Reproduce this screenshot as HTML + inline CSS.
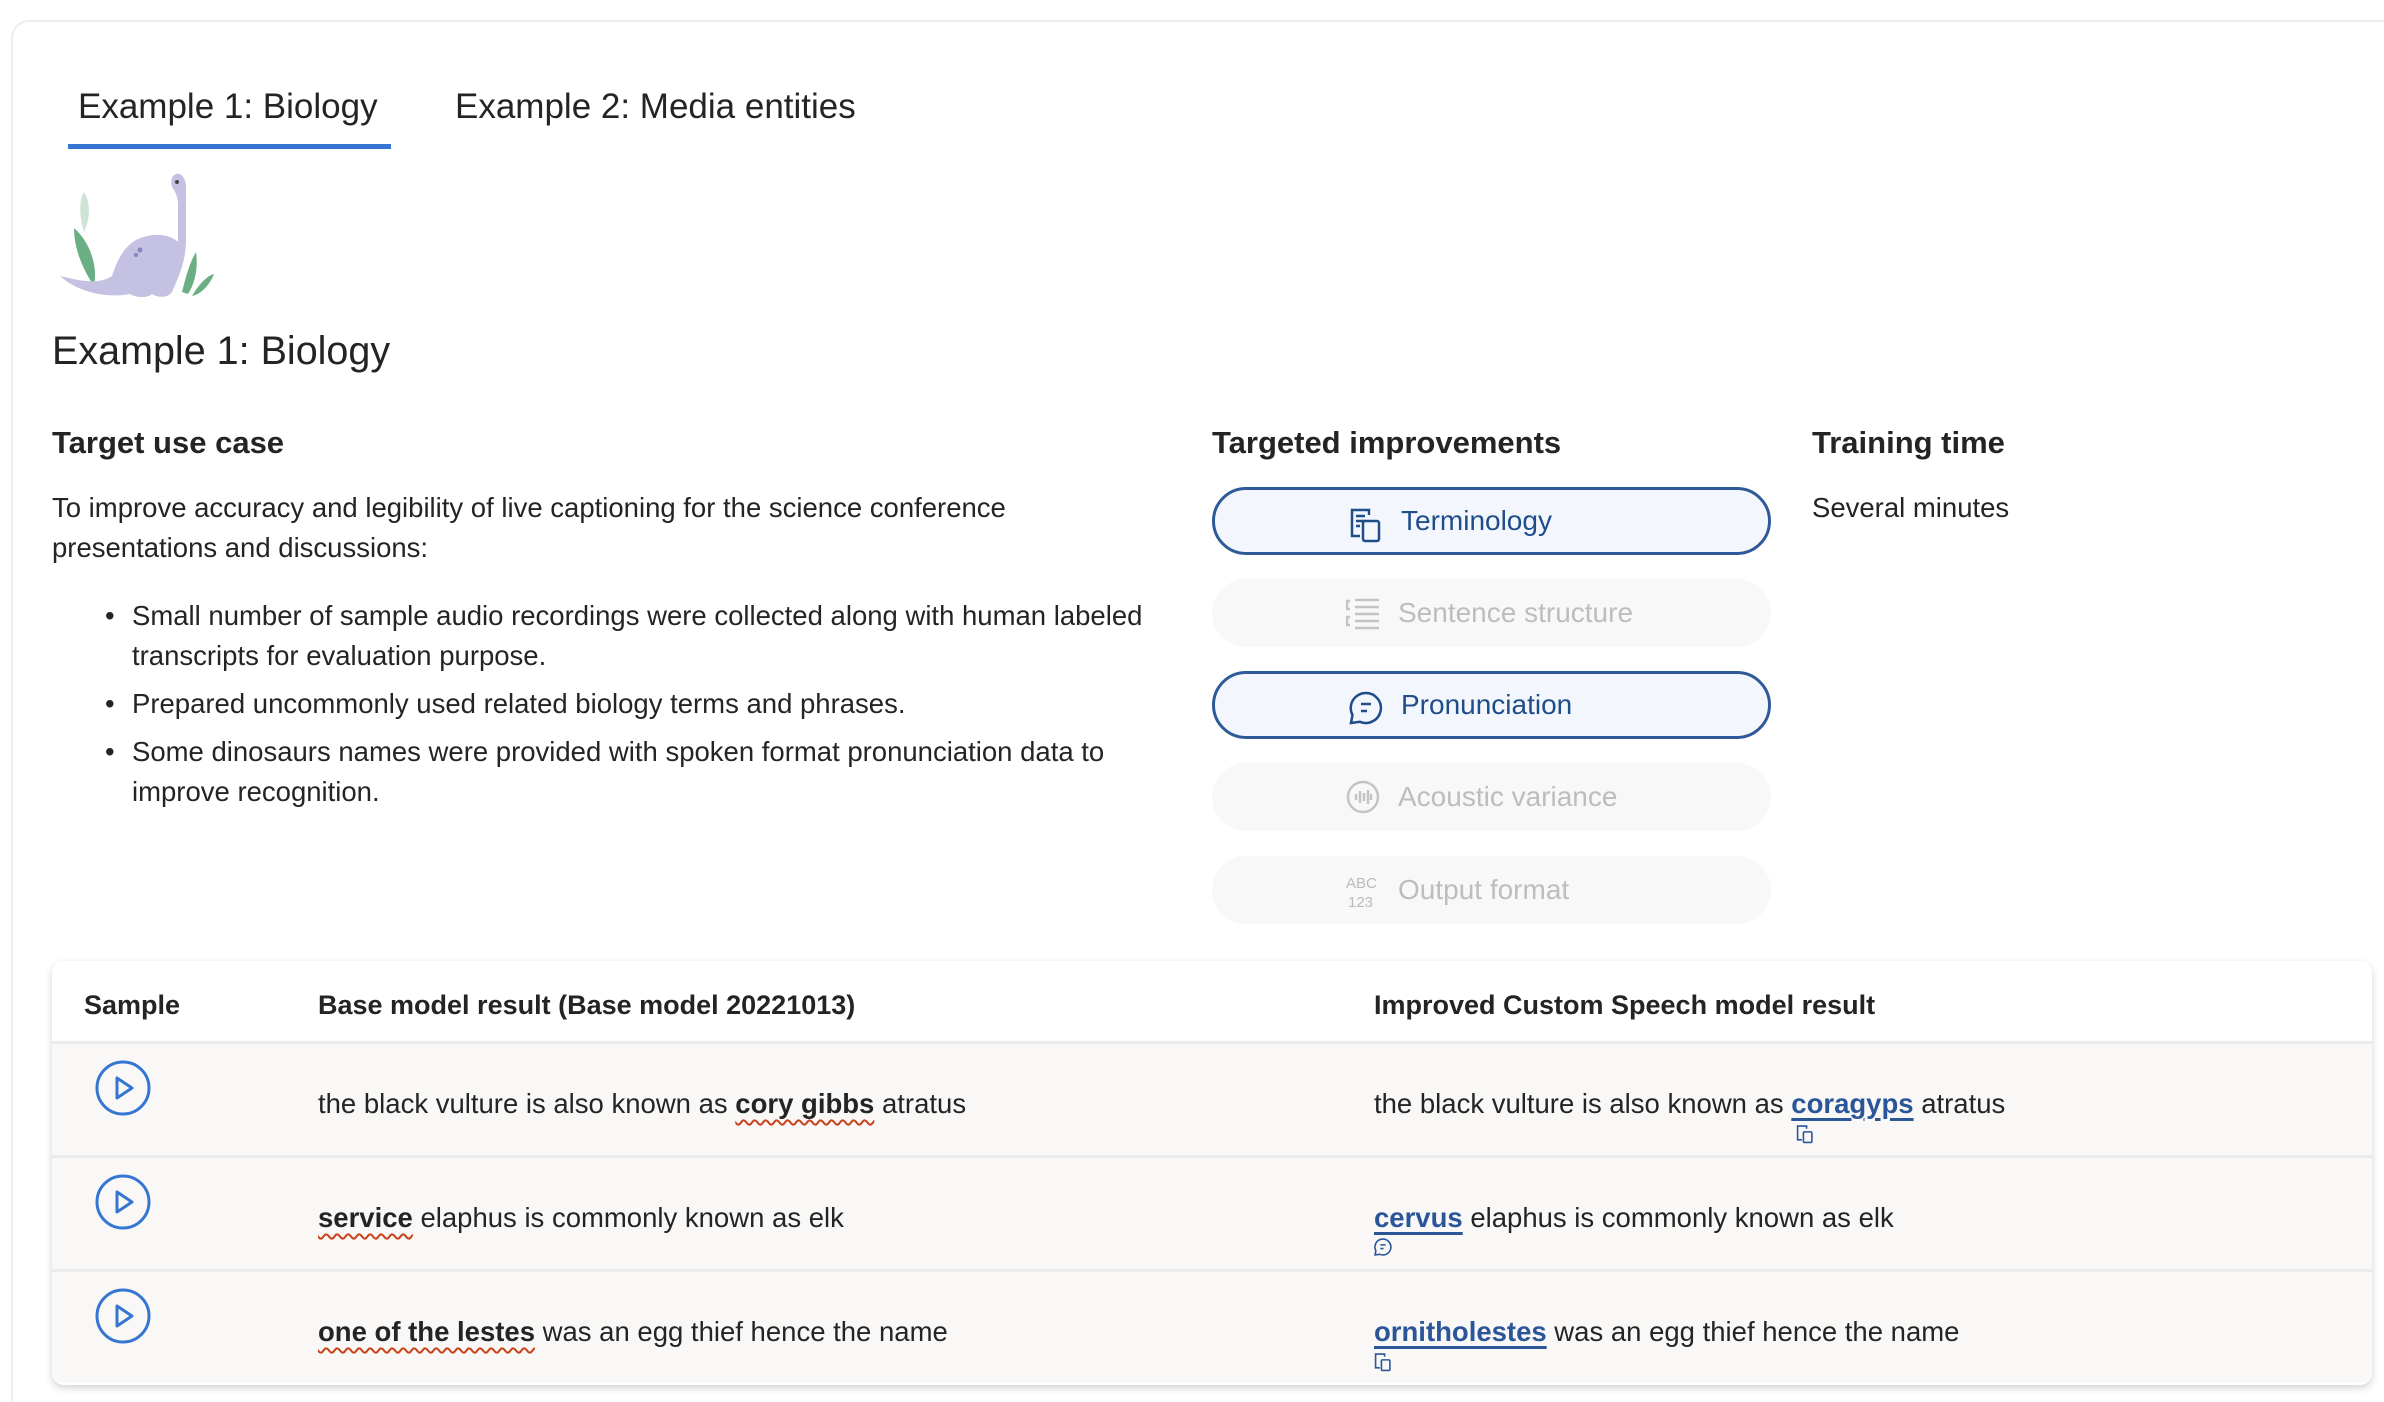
<!DOCTYPE html>
<html><head><meta charset="utf-8"><style>
*{box-sizing:border-box;margin:0;padding:0}
html,body{overflow:hidden}
body{width:2384px;height:1402px;background:#fff;font-family:"Liberation Sans",sans-serif;color:#242424;position:relative}
.card{position:absolute;left:11px;top:20px;width:2390px;height:1382px;border:2px solid #eeeeee;border-bottom:none;border-radius:18px 18px 0 0;background:#fff}
.abs{position:absolute;white-space:nowrap}
.tab{font-size:35px;top:87px}
.ul{position:absolute;left:68px;top:144px;width:323px;height:5px;background:#3476d2}
h2{position:absolute;left:52px;top:329px;font-size:39.5px;font-weight:normal;color:#242424}
h3{position:absolute;font-size:31px;font-weight:bold;top:425px;color:#242424}
.p{font-size:27.5px;line-height:40px;position:absolute}
.pill{position:absolute;left:1212px;width:559px;height:68px;border-radius:34px;background:#f8f8f8;color:#bdbdbd;font-size:28px}
.pill.on{border:3px solid #2e5a99;background:#f3f7fd;color:#1f4d8a}
.pill svg{position:absolute;left:134px;top:17px}
.pill span{position:absolute;left:186px;top:18px;white-space:nowrap}
.pill.on span{top:15px}
.tbl{position:absolute;left:52px;top:961px;width:2320px;height:424px;border-radius:12px;background:#fff;box-shadow:0 3px 8px rgba(0,0,0,.18);overflow:hidden}
.row{position:absolute;left:0;width:100%;height:114px;background:#f9f8f7;border-top:3px solid #ebebeb}
.t{position:absolute;font-size:27.5px;white-space:nowrap}
.th{font-size:27px;font-weight:bold;top:29px}
b.sq{text-decoration:underline wavy #c8421b;text-underline-offset:6px;text-decoration-thickness:2px}
a.l{color:#2a5699;font-weight:bold;text-decoration:underline;text-decoration-thickness:3px;text-underline-offset:5px}
.play{position:absolute;left:43px;top:16px}
.mi{position:absolute}
</style></head><body>
<div class="card"></div>
<div class="abs tab" style="left:78px">Example 1: Biology</div>
<div class="abs tab" style="left:455px">Example 2: Media entities</div>
<div class="ul"></div>
<svg class="abs" style="left:52px;top:172px" width="165" height="128" viewBox="0 0 165 128">
<path d="M32 20c-6 10-4 28 0 40 5-10 8-28 0-40z" fill="#cfe3d6"/>
<path d="M22 56c0 20 8 40 20 58 4-20-4-44-20-58z" fill="#6aae84"/>
<path d="M8 104c20 18 50 22 70 18 6 4 18 4 22 0 6 4 16 4 20-2 6-14 14-30 14-52V14c0-8-6-14-10-12-6 2-6 12-2 16 2 4 4 8 4 14v38c-8-8-26-10-42-2-14 8-20 24-24 36-12 8-28 6-52 0z" fill="#c4c1e2"/>
<circle cx="125" cy="10" r="2" fill="#444"/>
<circle cx="88" cy="78" r="2.5" fill="#8883bb"/><circle cx="84" cy="83" r="2" fill="#8883bb"/>
<path d="M130 120c4-16 8-30 14-40 2 14 0 30-8 42zM140 124c6-10 14-20 22-22-4 10-12 20-22 22z" fill="#6aae84"/>
</svg>
<h2>Example 1: Biology</h2>
<h3 style="left:52px">Target use case</h3>
<div class="p" style="left:52px;top:488px;width:1100px">To improve accuracy and legibility of live captioning for the science conference<br>presentations and discussions:</div>
<div class="p" style="left:105px;top:596px">•</div><div class="p" style="left:132px;top:596px">Small number of sample audio recordings were collected along with human labeled<br>transcripts for evaluation purpose.</div>
<div class="p" style="left:105px;top:684px">•</div><div class="p" style="left:132px;top:684px">Prepared uncommonly used related biology terms and phrases.</div>
<div class="p" style="left:105px;top:732px">•</div><div class="p" style="left:132px;top:732px">Some dinosaurs names were provided with spoken format pronunciation data to<br>improve recognition.</div>
<h3 style="left:1212px">Targeted improvements</h3>
<h3 style="left:1812px">Training time</h3>
<div class="p" style="left:1812px;top:488px">Several minutes</div>

<div class="pill on" style="top:487px"><svg width="34" height="36" viewBox="0 0 34 36" fill="none" stroke="#1f4d8a" stroke-width="2.5"><path d="M20 8V3H3v26h8"/><path d="M7 9h9M7 14h9M7 19h4"/><rect x="14" y="14" width="16" height="20" rx="2"/></svg><span>Terminology</span></div>
<div class="pill" style="top:579px"><svg width="34" height="34" viewBox="0 0 34 34" fill="none" stroke="#c4c4c4" stroke-width="2.5"><path d="M4 5H1v8h3M4 21H1v8h3M9 4h24M9 11h24M9 18h24M9 25h24M9 32h24"/></svg><span>Sentence structure</span></div>
<div class="pill on" style="top:671px"><svg width="34" height="34" viewBox="0 0 34 34" fill="none" stroke="#1f4d8a" stroke-width="2.5"><path d="M17 2a15 15 0 1 1-6 28.8L2 32l1.5-8A15 15 0 0 1 17 2z"/><path d="M12 13h10M12 20h6"/></svg><span>Pronunciation</span></div>
<div class="pill" style="top:763px"><svg width="34" height="34" viewBox="0 0 34 34" fill="none" stroke="#c4c4c4" stroke-width="2.5"><circle cx="17" cy="17" r="15"/><path d="M10 14v6M14 11v12M18 13v8M22 10v14M25 14v6"/></svg><span>Acoustic variance</span></div>
<div class="pill" style="top:856px"><svg width="36" height="38" viewBox="0 0 36 38"><text x="0" y="15" font-size="15" fill="#bbb" font-family="Liberation Sans">ABC</text><text x="2" y="34" font-size="15" fill="#bbb" font-family="Liberation Sans">123</text></svg><span>Output format</span></div>

<div class="tbl">
<div class="t th" style="left:32px">Sample</div>
<div class="t th" style="left:266px">Base model result (Base model 20221013)</div>
<div class="t th" style="left:1322px">Improved Custom Speech model result</div>
<div class="row" style="top:80px">
<svg class="play" width="56" height="56" viewBox="0 0 56 56" fill="none" stroke="#3476d2" stroke-width="3"><circle cx="28" cy="28" r="26"/><path d="M22 18v20l15-10z" stroke-linejoin="round"/></svg>
<div class="t" style="left:266px;top:44px">the black vulture is also known as <b class="sq">cory gibbs</b> atratus</div>
<div class="t" style="left:1322px;top:44px">the black vulture is also known as <a class="l">coragyps</a> atratus</div>
<svg class="mi" style="left:1744px;top:80px" width="18" height="20" viewBox="0 0 34 36" fill="none" stroke="#2a5699" stroke-width="3"><path d="M20 8V3H3v26h8"/><rect x="14" y="14" width="16" height="20" rx="2"/></svg>
</div>
<div class="row" style="top:194px">
<svg class="play" width="56" height="56" viewBox="0 0 56 56" fill="none" stroke="#3476d2" stroke-width="3"><circle cx="28" cy="28" r="26"/><path d="M22 18v20l15-10z" stroke-linejoin="round"/></svg>
<div class="t" style="left:266px;top:44px"><b class="sq">service</b> elaphus is commonly known as elk</div>
<div class="t" style="left:1322px;top:44px"><a class="l">cervus</a> elaphus is commonly known as elk</div>
<svg class="mi" style="left:1322px;top:80px" width="18" height="18" viewBox="0 0 34 34" fill="none" stroke="#2a5699" stroke-width="3"><path d="M17 2a15 15 0 1 1-6 28.8L2 32l1.5-8A15 15 0 0 1 17 2z"/><path d="M12 13h10M12 20h6"/></svg>
</div>
<div class="row" style="top:308px">
<svg class="play" width="56" height="56" viewBox="0 0 56 56" fill="none" stroke="#3476d2" stroke-width="3"><circle cx="28" cy="28" r="26"/><path d="M22 18v20l15-10z" stroke-linejoin="round"/></svg>
<div class="t" style="left:266px;top:44px"><b class="sq">one of the lestes</b> was an egg thief hence the name</div>
<div class="t" style="left:1322px;top:44px"><a class="l">ornitholestes</a> was an egg thief hence the name</div>
<svg class="mi" style="left:1322px;top:80px" width="18" height="20" viewBox="0 0 34 36" fill="none" stroke="#2a5699" stroke-width="3"><path d="M20 8V3H3v26h8"/><rect x="14" y="14" width="16" height="20" rx="2"/></svg>
</div>
</div>
</body></html>
